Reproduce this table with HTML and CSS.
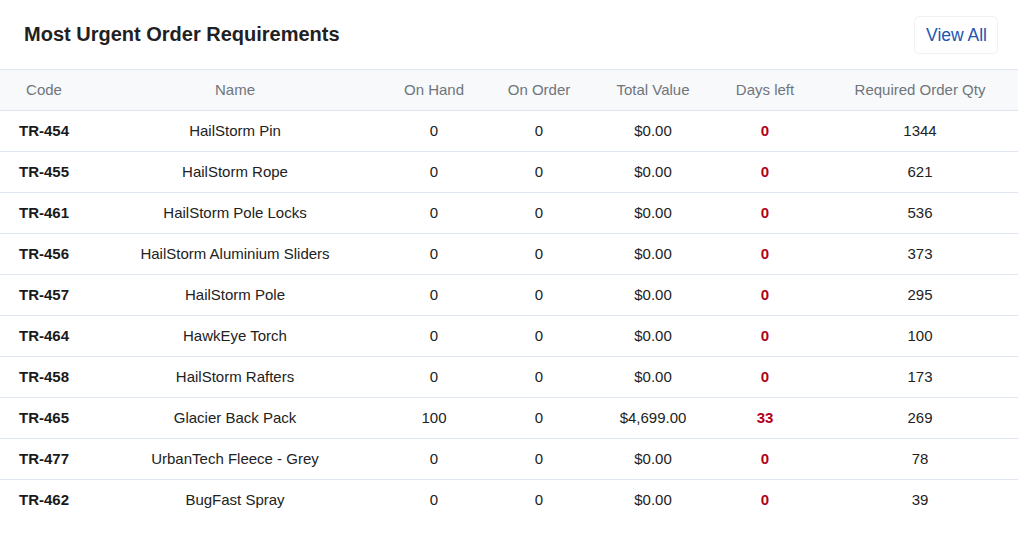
FILE: index.html
```html
<!DOCTYPE html>
<html>
<head>
<meta charset="utf-8">
<link rel="stylesheet" href="styles.css">
</head>
<body>
<div class="card">
  <div class="card-head">
    <h2 class="title">Most Urgent Order Requirements</h2>
    <a class="btn" href="#">View All</a>
  </div>
  <table class="grid">
    <colgroup>
      <col class="c-code"><col class="c-name"><col class="c-hand"><col class="c-order"><col class="c-value"><col class="c-days"><col class="c-req">
    </colgroup>
    <thead>
      <tr><th>Code</th><th>Name</th><th>On Hand</th><th>On Order</th><th>Total Value</th><th>Days left</th><th class="req">Required Order Qty</th></tr>
    </thead>
    <tbody>
      <tr><td class="code">TR-454</td><td>HailStorm Pin</td><td>0</td><td>0</td><td>$0.00</td><td class="days">0</td><td class="req">1344</td></tr>
      <tr><td class="code">TR-455</td><td>HailStorm Rope</td><td>0</td><td>0</td><td>$0.00</td><td class="days">0</td><td class="req">621</td></tr>
      <tr><td class="code">TR-461</td><td>HailStorm Pole Locks</td><td>0</td><td>0</td><td>$0.00</td><td class="days">0</td><td class="req">536</td></tr>
      <tr><td class="code">TR-456</td><td>HailStorm Aluminium Sliders</td><td>0</td><td>0</td><td>$0.00</td><td class="days">0</td><td class="req">373</td></tr>
      <tr><td class="code">TR-457</td><td>HailStorm Pole</td><td>0</td><td>0</td><td>$0.00</td><td class="days">0</td><td class="req">295</td></tr>
      <tr><td class="code">TR-464</td><td>HawkEye Torch</td><td>0</td><td>0</td><td>$0.00</td><td class="days">0</td><td class="req">100</td></tr>
      <tr><td class="code">TR-458</td><td>HailStorm Rafters</td><td>0</td><td>0</td><td>$0.00</td><td class="days">0</td><td class="req">173</td></tr>
      <tr><td class="code">TR-465</td><td>Glacier Back Pack</td><td>100</td><td>0</td><td>$4,699.00</td><td class="days">33</td><td class="req">269</td></tr>
      <tr><td class="code">TR-477</td><td>UrbanTech Fleece - Grey</td><td>0</td><td>0</td><td>$0.00</td><td class="days">0</td><td class="req">78</td></tr>
      <tr><td class="code">TR-462</td><td>BugFast Spray</td><td>0</td><td>0</td><td>$0.00</td><td class="days">0</td><td class="req">39</td></tr>
    </tbody>
  </table>
</div>
</body>
</html>
```
FILE: styles.css
```css
html, body {
  margin: 0;
  padding: 0;
  background: #fff;
}
body {
  font-family: "Liberation Sans", Arial, sans-serif;
  color: #222;
}
.card {
  width: 1018px;
}
.card-head {
  height: 69px;
  display: flex;
  align-items: center;
  justify-content: space-between;
  padding: 0 20px 0 24px;
  box-sizing: border-box;
}
.title {
  margin: 0;
  font-size: 20px;
  font-weight: bold;
  color: #1f2123;
}
.btn {
  display: flex;
  align-items: center;
  height: 38px;
  box-sizing: border-box;
  padding: 0 10px 0 11px;
  border: 1px solid #eff1f4;
  border-radius: 5px;
  font-size: 17.5px;
  color: #2356b0;
  text-decoration: none;
  margin-top: 1px;
}
.grid {
  width: 100%;
  border-collapse: collapse;
  table-layout: fixed;
  font-size: 15px;
}
.c-code { width: 88px; }
.c-name { width: 294px; }
.c-hand { width: 104px; }
.c-order { width: 106px; }
.c-value { width: 122px; }
.c-days { width: 102px; }
.c-req { width: 202px; }
.grid th {
  background: #f7f9fb;
  color: #70757b;
  font-weight: normal;
  height: 39px;
  padding: 0 0 1px;
  text-align: center;
  border-top: 1px solid #dfe6f1;
  border-bottom: 1px solid #dfe6f1;
}
.grid td {
  height: 39px;
  padding: 0 0 1px;
  text-align: center;
  color: #222;
  border-bottom: 1px solid #dfe6f1;
}
.grid .req {
  padding-left: 6px;
}
.grid tbody tr:last-child td {
  border-bottom: none;
}
.grid td.code {
  font-weight: bold;
  color: #1a1a1a;
}
.grid td.days {
  font-weight: bold;
  color: #b3001b;
}
```
